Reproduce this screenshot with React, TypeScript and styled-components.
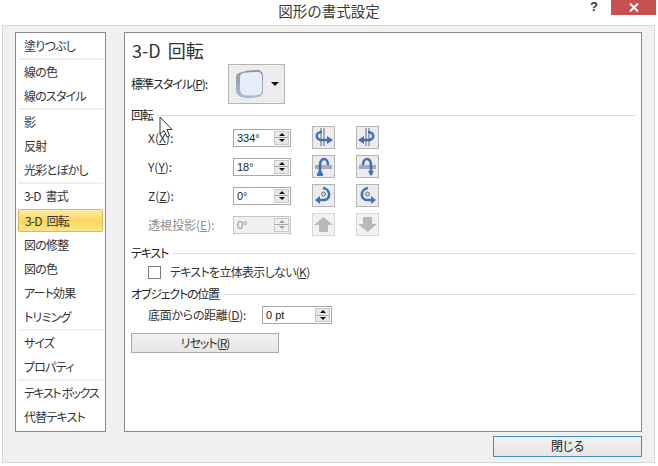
import * as React from "react";
import styled, { createGlobalStyle } from "styled-components";

const GlobalStyle = createGlobalStyle`
  html, body {
    margin: 0;
    padding: 0;
    background: #fff;
  }
  * {
    box-sizing: border-box;
  }
`;

const SWindow = styled.div`
  position: relative;
  width: 658px;
  height: 466px;
  background: #fff;
  overflow: hidden;
  color: #222;
  font-family: "Noto Sans CJK JP", "Liberation Sans", sans-serif;
  font-size: 12px;
  line-height: 16px;
  font-feature-settings: "palt";
`;

const STitleBar = styled.div`
  height: 25px;
  display: grid;
  grid-template-columns: 1fr auto 1fr;
`;

const STitle = styled.div`
  font-size: 14.5px;
  line-height: 22px;
  color: #3a3a3a;
  font-feature-settings: normal;
`;

const SControls = styled.div`
  display: flex;
  justify-content: flex-end;
  align-items: flex-start;
  padding-right: 2px;
`;

const SHelp = styled.div`
  width: 14px;
  margin-right: 7px;
  font-family: "Liberation Sans", sans-serif;
  font-weight: bold;
  font-size: 13px;
  line-height: 13px;
  color: #333;
`;

const SClose = styled.div`
  width: 45px;
  height: 15px;
  background: #c75050;
  display: flex;
  align-items: center;
  justify-content: center;
`;

const SBody = styled.div`
  margin: 0 3px 0 2px;
  height: 438px;
  border: 1px solid #d6d6d6;
  background: #f0f0f0;
  padding: 6px 12px 0;
`;

const SMain = styled.div`
  display: flex;
  gap: 18px;
  height: 400px;
`;

const SNav = styled.div`
  width: 91px;
  border: 1px solid #8a8a8a;
  background: #fff;
  padding: 1px 1px 0;
  display: flex;
  flex-direction: column;
`;

const SNavItem = styled.div<{ $active?: boolean; $tight?: boolean }>`
  height: 24px;
  flex: none;
  padding-left: ${({ $active }) => ($active ? "6px" : "7px")};
  display: flex;
  align-items: center;
  white-space: pre;
  color: #333;
  letter-spacing: ${({ $tight }) => ($tight ? "-1.4px" : "-0.8px")};
  word-spacing: ${({ $tight }) => ($tight ? "0" : "3px")};
  ${({ $active }) =>
    $active
      ? `
    height: 23px;
    margin: 1px 1px 1px 1px;
    border: 1px solid #d9b95f;
    border-radius: 2px;
    background: linear-gradient(#fdeaa8, #fbd75c 55%, #fde48a);
  `
      : ""}
`;

const SNavSeparator = styled.div`
  height: 2px;
  flex: none;
  margin: 0 1px;
  background: #f0f0f0;
`;

const SPanel = styled.div`
  flex: 1;
  border: 1px solid #8a8a8a;
  background: #fff;
  padding: 4px 5px 0 6px;
`;

const SHeading = styled.div`
  font-size: 18px;
  line-height: 26px;
  color: #333;
  margin-left: 1px;
  word-spacing: 3px;
  font-feature-settings: normal;
`;

const SStyleRow = styled.div`
  display: flex;
  align-items: center;
  height: 40px;
  margin-top: 1px;
`;

const SStyleLabel = styled.div`
  width: 97px;
  letter-spacing: -1px;
`;

const SStyleButton = styled.div`
  width: 57px;
  height: 40px;
  background: #ececec;
  border: 1px solid #b4b4b4;
  display: flex;
  align-items: center;
  justify-content: space-between;
  padding: 0 5px 0 6px;
`;

const SCaret = styled.div`
  width: 0;
  height: 0;
  border-left: 4px solid transparent;
  border-right: 4px solid transparent;
  border-top: 4px solid #111;
`;

const SSection = styled.div<{ $top: number }>`
  display: flex;
  align-items: center;
  gap: 5px;
  height: 16px;
  margin-top: ${({ $top }) => $top}px;
  letter-spacing: -1.2px;
  &::after {
    content: "";
    flex: 1;
    height: 1px;
    background: #dcdcdc;
  }
`;

const SRotationGrid = styled.div`
  display: grid;
  grid-template-columns: 85px 58px 21px 23px 21px 23px;
  grid-auto-rows: 29px;
  align-items: center;
  padding-left: 17px;
`;

const SFieldLabel = styled.div<{ $disabled?: boolean }>`
  color: ${({ $disabled }) => ($disabled ? "#8c8c8c" : "#333")};
  white-space: nowrap;
`;

const SCheckLabel = styled(SFieldLabel)`
  letter-spacing: -0.7px;
`;

const SUnderlined = styled.span`
  text-decoration: underline;
`;

const SSpinner = styled.div<{ $disabled?: boolean; $width?: number }>`
  width: ${({ $width }) => $width ?? 58}px;
  height: 18px;
  border: 1px solid ${({ $disabled }) => ($disabled ? "#c4c4c4" : "#a8a8a8")};
  background: ${({ $disabled }) => ($disabled ? "#f0f0f0" : "#fff")};
  color: ${({ $disabled }) => ($disabled ? "#8c8c8c" : "#222")};
  display: flex;
  align-items: center;
  justify-content: space-between;
  padding: 0 1px 0 3px;
  font-family: "Liberation Sans", sans-serif;
  font-size: 11px;
`;

const SSpinButtons = styled.div`
  width: 15px;
  height: 14px;
  display: flex;
  flex-direction: column;
  gap: 1px;
  background: #a8a8a8;
  border: 1px solid #c8c8c8;
`;

const SSpinHalf = styled.div<{ $disabled?: boolean }>`
  flex: 1;
  background: ${({ $disabled }) => ($disabled ? "#f0f0f0" : "#e8e8e8")};
  display: flex;
  align-items: center;
  justify-content: center;
`;

const SSpinUp = styled.div<{ $disabled?: boolean }>`
  width: 0;
  height: 0;
  border-left: 3px solid transparent;
  border-right: 3px solid transparent;
  border-bottom: 3px solid ${({ $disabled }) => ($disabled ? "#a0a0a0" : "#111")};
`;

const SSpinDown = styled(SSpinUp)`
  transform: rotate(180deg);
`;

const SIconButton = styled.div<{ $disabled?: boolean }>`
  width: 23px;
  height: 23px;
  background: ${({ $disabled }) => ($disabled ? "#f2f2f2" : "#ececec")};
  border: 1px solid ${({ $disabled }) => ($disabled ? "#d8d8d8" : "#b4b4b4")};
  display: flex;
  align-items: center;
  justify-content: center;
`;

const SCheckRow = styled.div`
  display: flex;
  align-items: center;
  gap: 9px;
  height: 18px;
  padding-left: 17px;
  margin-top: 2px;
`;

const SCheckbox = styled.div`
  width: 13px;
  height: 13px;
  border: 1px solid #7a7a7a;
  background: #fff;
`;

const SDistanceRow = styled.div`
  display: flex;
  align-items: center;
  height: 18px;
  padding-left: 17px;
  margin-top: 4px;
`;

const SDistanceLabel = styled.div`
  width: 114px;
  white-space: nowrap;
  color: #333;
  letter-spacing: -0.3px;
`;

const SResetButton = styled.div`
  width: 148px;
  height: 20px;
  margin-top: 9px;
  background: linear-gradient(#f2f2f2, #e6e6e6);
  border: 1px solid #a8a8a8;
  text-align: center;
  line-height: 17px;
  color: #333;
  letter-spacing: -1px;
`;

const SFooter = styled.div`
  display: flex;
  justify-content: flex-end;
  margin-top: 4px;
`;

const SCloseButton = styled.div`
  width: 149px;
  height: 21px;
  background: linear-gradient(#f2f2f2, #e6e6e6);
  border: 1px solid #3c8fc4;
  text-align: center;
  line-height: 18px;
  color: #222;
`;

const SCursor = styled.svg`
  position: absolute;
  left: 159px;
  top: 116px;
`;

const navGroups = [
  ["塗りつぶし"],
  ["線の色", "線のスタイル"],
  ["影", "反射", "光彩とぼかし"],
  ["3-D 書式", "3-D 回転", "図の修整", "図の色", "アート効果", "トリミング"],
  ["サイズ", "プロパティ"],
  ["テキスト ボックス", "代替テキスト"],
];

const ShapeIcon = () => (
  <svg width="29" height="30" viewBox="0 0 29 30">
    <defs>
      <linearGradient id="edge" x1="0" y1="0" x2="0" y2="1">
        <stop offset="0" stopColor="#8e929c" />
        <stop offset="1" stopColor="#a9bbd8" />
      </linearGradient>
    </defs>
    <path d="M4 4 Q12 1 23 1 Q28 2 28 7 L28 22 Q28 27 23 28 Q13 30 6 28 Q1 26 1 20 L1 9 Q1 5 4 4Z" fill="url(#edge)" />
    <path d="M8 4 Q15 3 24 3 Q27 4 27 8 L27 21 Q27 25 23 26 Q14 27 9 26 Q5 25 5 20 L5 8 Q5 5 8 4Z" fill="#e6edf9" />
  </svg>
);

interface IRotation {
  axis: string;
  ring: string;
  head: string;
}

const rotations: { [key: string]: IRotation } = {
  xl: { axis: "M8 1 V19 M11 1 V19", ring: "M9 5 C2 5 2 13 9 13 H15", head: "M14 9 L20 13 L14 17Z" },
  xr: { axis: "M9 1 V19 M12 1 V19", ring: "M11 5 C18 5 18 13 11 13 H6", head: "M7 9 L1 13 L7 17Z" },
  yl: { axis: "M2 10 H19 M2 12 H19", ring: "M7 18 V9 C7 1 15 1 15 9", head: "M4 18 L7 13 L10 18 V20 H4Z" },
  yr: { axis: "M2 10 H19 M2 12 H19", ring: "M14 19 V9 C14 1 6 1 6 9", head: "M11 15 H17 L14 20Z" },
  zl: { axis: "", ring: "M6 15 H11 C18 15 18 4 10 3", head: "M7 11 L2 15 L7 19Z" },
  zr: { axis: "", ring: "M15 15 H10 C3 15 3 4 11 3", head: "M14 11 L19 15 L14 19Z" },
};

const RotateIcon = ({ name }: { name: string }) => {
  const { axis, ring, head } = rotations[name];
  return (
    <svg width="21" height="21" viewBox="0 0 21 21" fill="none">
      <path d={ring} stroke="#3f70c4" strokeWidth="2.6" />
      <path d={head} fill="#3f70c4" />
      {axis ? (
        <path d={axis} stroke="#5c6b80" strokeWidth="1" />
      ) : (
        <circle cx="10.5" cy="9" r="2" fill="#c9d6e6" stroke="#6a7686" />
      )}
    </svg>
  );
};

const ArrowIcon = ({ down }: { down?: boolean }) => (
  <svg width="21" height="21" viewBox="0 0 21 21">
    <path d={down ? "M6 3 H15 V10 H20 L10.5 18 L1 10 H6Z" : "M10.5 3 L20 11 H15 V18 H6 V11 H1Z"} fill="#b8b8b8" />
  </svg>
);

interface ISpinnerProps {
  value: string;
  disabled?: boolean;
  width?: number;
}

const Spinner = ({ value, disabled, width }: ISpinnerProps) => (
  <SSpinner $disabled={disabled} $width={width}>
    <span>{value}</span>
    <SSpinButtons>
      <SSpinHalf $disabled={disabled}>
        <SSpinUp $disabled={disabled} />
      </SSpinHalf>
      <SSpinHalf $disabled={disabled}>
        <SSpinDown $disabled={disabled} />
      </SSpinHalf>
    </SSpinButtons>
  </SSpinner>
);

const rotationRows = [
  { label: <>X(<SUnderlined>X</SUnderlined>):</>, value: "334°", icons: ["xl", "xr"] },
  { label: <>Y(<SUnderlined>Y</SUnderlined>):</>, value: "18°", icons: ["yl", "yr"] },
  { label: <>Z(<SUnderlined>Z</SUnderlined>):</>, value: "0°", icons: ["zl", "zr"] },
];

const App = () => (
  <SWindow>
    <GlobalStyle />
    <STitleBar>
      <div />
      <STitle>図形の書式設定</STitle>
      <SControls>
        <SHelp>?</SHelp>
        <SClose>
          <svg width="10" height="9" viewBox="0 0 10 9" stroke="#fff" strokeWidth="2">
            <path d="M1 0.5 L9 8.5 M9 0.5 L1 8.5" />
          </svg>
        </SClose>
      </SControls>
    </STitleBar>
    <SBody>
      <SMain>
        <SNav>
          {navGroups.map((group, i) => (
            <React.Fragment key={i}>
              {i > 0 && <SNavSeparator />}
              {group.map(item => (
                <SNavItem key={item} $active={item === "3-D 回転"} $tight={item === "テキスト ボックス"}>
                  {item}
                </SNavItem>
              ))}
            </React.Fragment>
          ))}
        </SNav>
        <SPanel>
          <SHeading>3-D 回転</SHeading>
          <SStyleRow>
            <SStyleLabel>
              標準スタイル(<SUnderlined>P</SUnderlined>):
            </SStyleLabel>
            <SStyleButton>
              <ShapeIcon />
              <SCaret />
            </SStyleButton>
          </SStyleRow>
          <SSection $top={3}>回転</SSection>
          <SRotationGrid>
            {rotationRows.map((row, i) => (
              <React.Fragment key={i}>
                <SFieldLabel>{row.label}</SFieldLabel>
                <Spinner value={row.value} />
                <div />
                <SIconButton>
                  <RotateIcon name={row.icons[0]} />
                </SIconButton>
                <div />
                <SIconButton>
                  <RotateIcon name={row.icons[1]} />
                </SIconButton>
              </React.Fragment>
            ))}
            <SFieldLabel $disabled>
              透視投影(<SUnderlined>E</SUnderlined>):
            </SFieldLabel>
            <Spinner value="0°" disabled />
            <div />
            <SIconButton $disabled>
              <ArrowIcon />
            </SIconButton>
            <div />
            <SIconButton $disabled>
              <ArrowIcon down />
            </SIconButton>
          </SRotationGrid>
          <SSection $top={6}>テキスト</SSection>
          <SCheckRow>
            <SCheckbox />
            <SCheckLabel>
              テキストを立体表示しない(<SUnderlined>K</SUnderlined>)
            </SCheckLabel>
          </SCheckRow>
          <SSection $top={5}>オブジェクトの位置</SSection>
          <SDistanceRow>
            <SDistanceLabel>
              底面からの距離(<SUnderlined>D</SUnderlined>):
            </SDistanceLabel>
            <Spinner value="0 pt" width={70} />
          </SDistanceRow>
          <SResetButton>
            リセット(<SUnderlined>R</SUnderlined>)
          </SResetButton>
        </SPanel>
      </SMain>
      <SFooter>
        <SCloseButton>閉じる</SCloseButton>
      </SFooter>
    </SBody>
    <SCursor width="14" height="24" viewBox="0 0 14 24">
      <path d="M1 1 V18 L5 14.5 L8 21 L10.5 20 L8 13.5 H13Z" fill="#fff" stroke="#333" strokeWidth="1" />
    </SCursor>
  </SWindow>
);

export default App;
